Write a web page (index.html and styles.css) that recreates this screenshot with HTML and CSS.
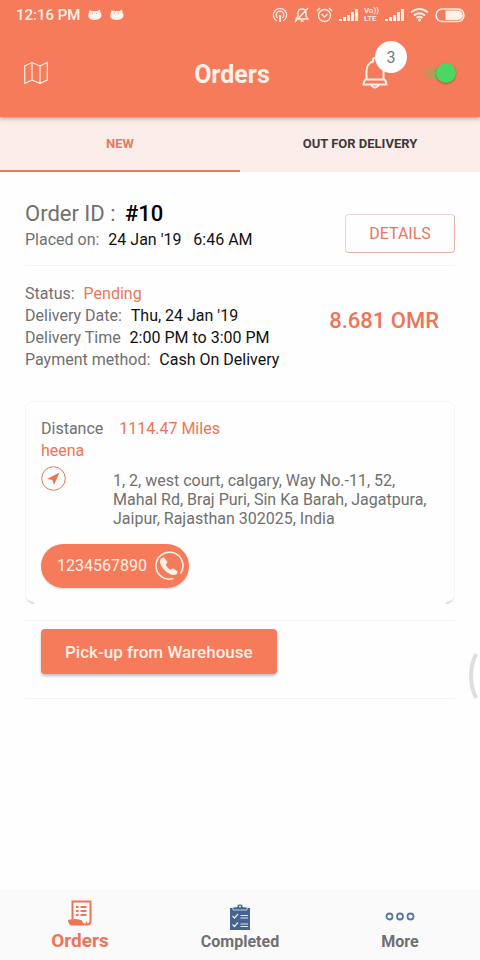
FILE: index.html
```html
<!DOCTYPE html>
<html lang="en">
<head>
<meta charset="utf-8">
<meta name="viewport" content="width=device-width, initial-scale=1">
<title>Orders</title>
<link rel="stylesheet" href="styles.css">
</head>
<body>
<header class="top">
  <div class="status">
    <span class="clock">12:16 PM</span>
    <svg width="14" height="12" viewBox="0 0 14 12"><path d="M1 3.500L1.500 1l2 1h6L12 .500l.500 3Q14.500 6 12.500 9q-2 2-6 2-5 0-6-3-.500-2.500 .500-4.500z" fill="currentColor"/><circle cx="4.500" cy="4.200" r=".5" fill="#f57b5b"/><circle cx="8.500" cy="4.200" r=".5" fill="#f57b5b"/></svg>
    <svg width="14" height="12" viewBox="0 0 14 12"><path d="M1 3.500L1.500 1l2 1h6L12 .500l.500 3Q14.500 6 12.500 9q-2 2-6 2-5 0-6-3-.500-2.500 .500-4.500z" fill="currentColor"/><circle cx="4.500" cy="4.200" r=".5" fill="#f57b5b"/><circle cx="8.500" cy="4.200" r=".5" fill="#f57b5b"/></svg>
    <div class="signals">
      <svg width="16" height="16" viewBox="0 0 16 16" fill="none" stroke="currentColor" stroke-width="1.300"><path d="M5 14A6.700 6.700 0 1 1 11 14M5.700 10.800A3.700 3.700 0 1 1 10.300 10.800"/><path d="M8 8v7" stroke-width="2"/></svg>
      <svg width="16" height="16" viewBox="0 0 16 16" fill="none" stroke="currentColor" stroke-width="1.300"><path d="M2 12h12l-2-3V6Q12 2 8 2T4 6v3zM6.500 14h3M1 15L14 1"/></svg>
      <svg width="17" height="16" viewBox="0 0 17 16" fill="none" stroke="currentColor" stroke-width="1.300"><circle cx="8.500" cy="8.500" r="6"/><path d="M5.500 7l3 3 3-3M1 4l3-3M16 4l-3-3"/></svg>
      <svg width="19" height="16" viewBox="0 0 19 16" fill="currentColor"><path d="M0 12h3v2H0zM4 10h3v4H4zM8 8h3v6H8zM12 5h3v9h-3zM16 2h3v12h-3z"/></svg>
      <span class="volte">Vo))<br>LTE</span>
      <svg width="19" height="16" viewBox="0 0 19 16" fill="currentColor"><path d="M0 12h3v2H0zM4 10h3v4H4zM8 8h3v6H8zM12 5h3v9h-3zM16 2h3v12h-3z"/></svg>
      <svg width="19" height="16" viewBox="0 0 19 16" fill="none" stroke="currentColor" stroke-width="1.800"><path d="M1 5.500q8.500-7 17 0M4 8.500q5.500-4.500 11 0M6.500 11q3-2.500 6 0"/><circle cx="9.500" cy="13" r=".7"/></svg>
      <svg width="30" height="16" viewBox="0 0 30 16"><rect x="1" y="2" width="28" height="12.500" rx="6.200" fill="none" stroke="currentColor" stroke-width="1.500"/><path d="M10.500 3.500H23a4.700 4.700 0 0 1 0 9.500H10.500z" fill="currentColor"/></svg>
    </div>
  </div>
  <div class="bar">
    <button class="icon-btn" aria-label="Map"><svg width="24" height="24" viewBox="0 0 24 24" fill="none" stroke="currentColor" stroke-width="1.200" stroke-linejoin="round"><path d="M.700 5L8 1.500l8 3.500 7.300-3.500V19L16 22.500 8 19 .700 22.500zM8 1.500V19M16 5v17.500"/></svg></button>
    <h1>Orders</h1>
    <div class="actions">
      <button class="icon-btn bell" aria-label="Notifications"><svg width="26" height="33" viewBox="0 0 26 33" fill="none" stroke="currentColor" stroke-width="2"><path d="M4.500 22.500V14c0-5 3-8.500 6.500-9.500V3a2 2 0 0 1 4 0v1.500c3.500 1 6.500 4.500 6.500 9.500v8.500"/><path d="M3.500 22.500h19q2 2 2 5h-23q0-3 2-5zM9 28q4 5 8 0"/></svg><span class="badge">3</span></button>
      <input class="switch" type="checkbox" checked aria-label="Available">
    </div>
  </div>
</header>
<div class="tabs">
  <button class="tab active">NEW</button>
  <button class="tab">OUT FOR DELIVERY</button>
</div>
<main class="order">
  <section class="summary">
    <div class="heading">
      <h2>Order ID : <b>#10</b></h2>
      <p>Placed on: <span class="value">24 Jan '19 &nbsp; 6:46 AM</span></p>
    </div>
    <button class="details">DETAILS</button>
  </section>
  <section class="info">
    <div>
      <p>Status: <span class="value accent">Pending</span></p>
      <p>Delivery Date: <span class="value">Thu, 24 Jan '19</span></p>
      <p>Delivery Time <span class="value">2:00 PM to 3:00 PM</span></p>
      <p>Payment method: <span class="value">Cash On Delivery</span></p>
    </div>
    <strong class="price">8.681 OMR</strong>
  </section>
  <section class="card">
    <p>Distance <span class="distance">1114.47 Miles</span></p>
    <p class="accent">heena</p>
    <div class="place">
      <button class="icon-btn accent" aria-label="Navigate"><svg width="25" height="25" viewBox="0 0 25 25"><circle cx="12.500" cy="12.500" r="11.800" fill="none" stroke="currentColor"/><path d="M18.500 6.500L6 13l5.500 1 1.500 5z" fill="currentColor"/></svg></button>
      <address>1, 2, west court, calgary, Way No.-11, 52, Mahal Rd, Braj Puri, Sin Ka Barah, Jagatpura, Jaipur, Rajasthan 302025, India</address>
    </div>
    <a class="phone" href="tel:1234567890">1234567890 <svg width="30" height="30" viewBox="0 0 30 30"><path d="M19.500 27.600A13.500 13.500 0 1 1 26.500 22.500" fill="none" stroke="currentColor" stroke-width="1.600"/><path d="M7.500 7.200l2.500-1 3.500 5-1.800 2.500q1.500 3.500 4.800 5.100l2.500-1.600 4.700 3.300-1 2.700q-3 1.500-6.500 0Q8 19 6 11.500 5.700 8.500 7.500 7.200z" fill="currentColor"/></svg></a>
  </section>
  <section class="pickup">
    <button class="primary">Pick-up from Warehouse</button>
  </section>
</main>
<svg class="edge" width="12" height="46" viewBox="0 0 12 46" fill="none" stroke="#dedede" stroke-width="4"><path d="M8 1Q-2 23 8 45"/></svg>
<nav class="nav">
  <a class="active" href="#orders"><svg width="24" height="26" viewBox="0 0 24 26"><path d="M4.500 19V1.500H22.500V21q0 3.500-3.500 3.500" fill="none" stroke="currentColor" stroke-width="2"/><path d="M0 20q6-2 13 0 1 0 1.500 2 1 2 3 1.500l1.500-3 .5 5H5q-5 0-5-5.500z" fill="currentColor"/><path d="M8 7h2.500M8 11h2.500M8 15h2.500M12.500 7H18.500M12.500 11H18.500M12.500 15H18.500" stroke="currentColor" stroke-width="1.800"/></svg><span>Orders</span></a>
  <a href="#completed"><svg width="20" height="27" viewBox="0 0 20 27"><path d="M0 5h20v22H0z" fill="#46638f"/><path d="M3 7V4h4a3 3 0 0 1 6 0h4v3z" fill="#46638f" stroke="#e3e9f2" stroke-width=".8"/><circle cx="10" cy="3.500" r="1" fill="#fafafa"/><path d="M2.500 13l2 2L8 11M2.500 21.500l2 2L8 19.500M10.500 12.500H18M10.500 15H18M10.500 21H18M10.500 23.500H18" fill="none" stroke="#e3e9f2" stroke-width="1.200"/></svg><span>Completed</span></a>
  <a href="#more"><svg width="30" height="27" viewBox="0 0 30 27" fill="none" stroke="#5e7699" stroke-width="1.800"><circle cx="4.500" cy="13.500" r="3"/><circle cx="15" cy="13.500" r="3"/><circle cx="25.500" cy="13.500" r="3"/></svg><span>More</span></a>
</nav>
</body>
</html>
```

FILE: styles.css
```css
* { box-sizing: border-box; }
body {
  margin: 0;
  min-height: 100vh;
  display: flex;
  flex-direction: column;
  background: #fefefe;
  color: #707070;
  font: 16px/22px Roboto, sans-serif;
}
h1, h2, p { margin: 0; }
button { font: inherit; color: inherit; border: 0; padding: 0; background: none; }
a { color: inherit; text-decoration: none; }
svg { display: block; flex: none; }
.accent { color: #ef7456; }

.top {
  position: relative;
  background: #f57b5b;
  color: #fff0e8;
  box-shadow: 0 1px 4px rgba(60, 50, 30, .5);
}
.status { display: flex; align-items: center; gap: 8px; height: 32px; padding: 0 15px 2px 16px; }
.clock { font-size: 15px; font-weight: 500; }
.signals { display: flex; align-items: center; gap: 6px; margin-left: auto; }
.volte { font-size: 8px; line-height: 8px; font-weight: 500; }
.bar {
  display: grid;
  grid-template-columns: 1fr auto 1fr;
  align-items: center;
  height: 85px;
  padding: 0 24px 3px;
}
h1 { padding: 3px 16px 0 0; font-size: 25px; line-height: 32px; font-weight: 700; }
.actions { display: flex; justify-content: flex-end; align-items: center; gap: 36px; }
.bell { position: relative; }
.badge {
  position: absolute;
  top: -16px;
  right: -19px;
  width: 32px;
  height: 32px;
  border-radius: 50%;
  background: #fff;
  color: #777;
  line-height: 34px;
  text-align: center;
}
.switch {
  appearance: none;
  display: flex;
  justify-content: flex-end;
  align-items: center;
  width: 32px;
  height: 20px;
  margin: 0;
  background: linear-gradient(90deg, rgba(140, 175, 85, .1), rgba(140, 175, 85, .8) 12px) center / 100% 12px no-repeat;
}
.switch::before {
  content: "";
  width: 20px;
  height: 20px;
  border-radius: 50%;
  background: #4bd763;
  box-shadow: 0 1px 2px rgba(90, 60, 20, .5);
}

.tabs { display: flex; background: #faece9; }
.tab { flex: 1; height: 55px; border-bottom: 2px solid transparent; font-size: 13px; font-weight: 700; color: #403838; }
.tab.active { color: #e9795f; border-color: #ea7860; }

.order { flex: 1; padding: 0 25px; }
.summary {
  display: flex;
  justify-content: space-between;
  align-items: flex-end;
  padding: 27px 0 12px;
  border-bottom: 1px solid #f3f3f3;
}
.heading { padding-bottom: 2px; }
h2 { font-size: 22px; line-height: 30px; font-weight: 400; }
h2 b { margin-left: 4px; color: #000; font-weight: 500; }
.value { margin-left: 5px; color: #111; }
.value.accent { color: #ef7456; }
.details {
  width: 110px;
  height: 39px;
  border: 1px solid #e9b5a8;
  border-top-color: #e6d8da;
  border-left-color: #e6d8da;
  border-radius: 4px;
  color: #e8775f;
}
.info { display: flex; justify-content: space-between; align-items: center; padding: 17px 16px 30px 0; }
.price { padding-bottom: 12px; font-size: 22px; line-height: 28px; font-weight: 500; color: #ef7456; }
.card {
  position: relative;
  padding: 16px 15px;
  border: 1px solid #f5f5f5;
  border-bottom-color: transparent;
  border-radius: 8px;
  margin-bottom: 15px;
}
.card::before,
.card::after {
  content: "";
  position: absolute;
  bottom: 0;
  width: 8px;
  height: 8px;
  border-bottom: 2px solid #dcdcdc;
}
.card::before { left: 0; border-bottom-left-radius: 8px; }
.card::after { right: 0; border-bottom-right-radius: 8px; }
.distance { margin-left: 12px; color: #ef7456; }
.place { display: flex; align-items: flex-start; gap: 47px; padding-top: 4px; }
address { padding-top: 5px; font-style: normal; line-height: 19px; }
.phone {
  display: inline-flex;
  align-items: center;
  gap: 7px;
  height: 44px;
  margin-top: 16px;
  padding: 0 5px 0 16px;
  border-radius: 22px;
  vertical-align: top;
  background: #f57b5b;
  color: #fff0e8;
  box-shadow: 0 1px 2px rgba(0, 0, 0, .15);
}
.pickup { padding: 8px 16px 24px; border: solid #f3f3f3; border-width: 1px 0; }
.primary {
  height: 45px;
  padding: 0 24px;
  border-radius: 4px;
  background: #f57b5b;
  color: #fff0e8;
  font-size: 17px;
  font-weight: 500;
  vertical-align: top;
  box-shadow: 0 2px 3px rgba(0, 0, 0, .25);
}
.edge { position: fixed; right: 0; top: 653px; }

.nav { display: flex; background: #fafafa; }
.nav a {
  flex: 1;
  display: flex;
  flex-direction: column;
  align-items: center;
  padding: 14px 0 6px;
  font-weight: 700;
  line-height: 24px;
}
.nav .active { padding-top: 11px; gap: 3px; color: #ef7456; font-size: 19px; }
```
